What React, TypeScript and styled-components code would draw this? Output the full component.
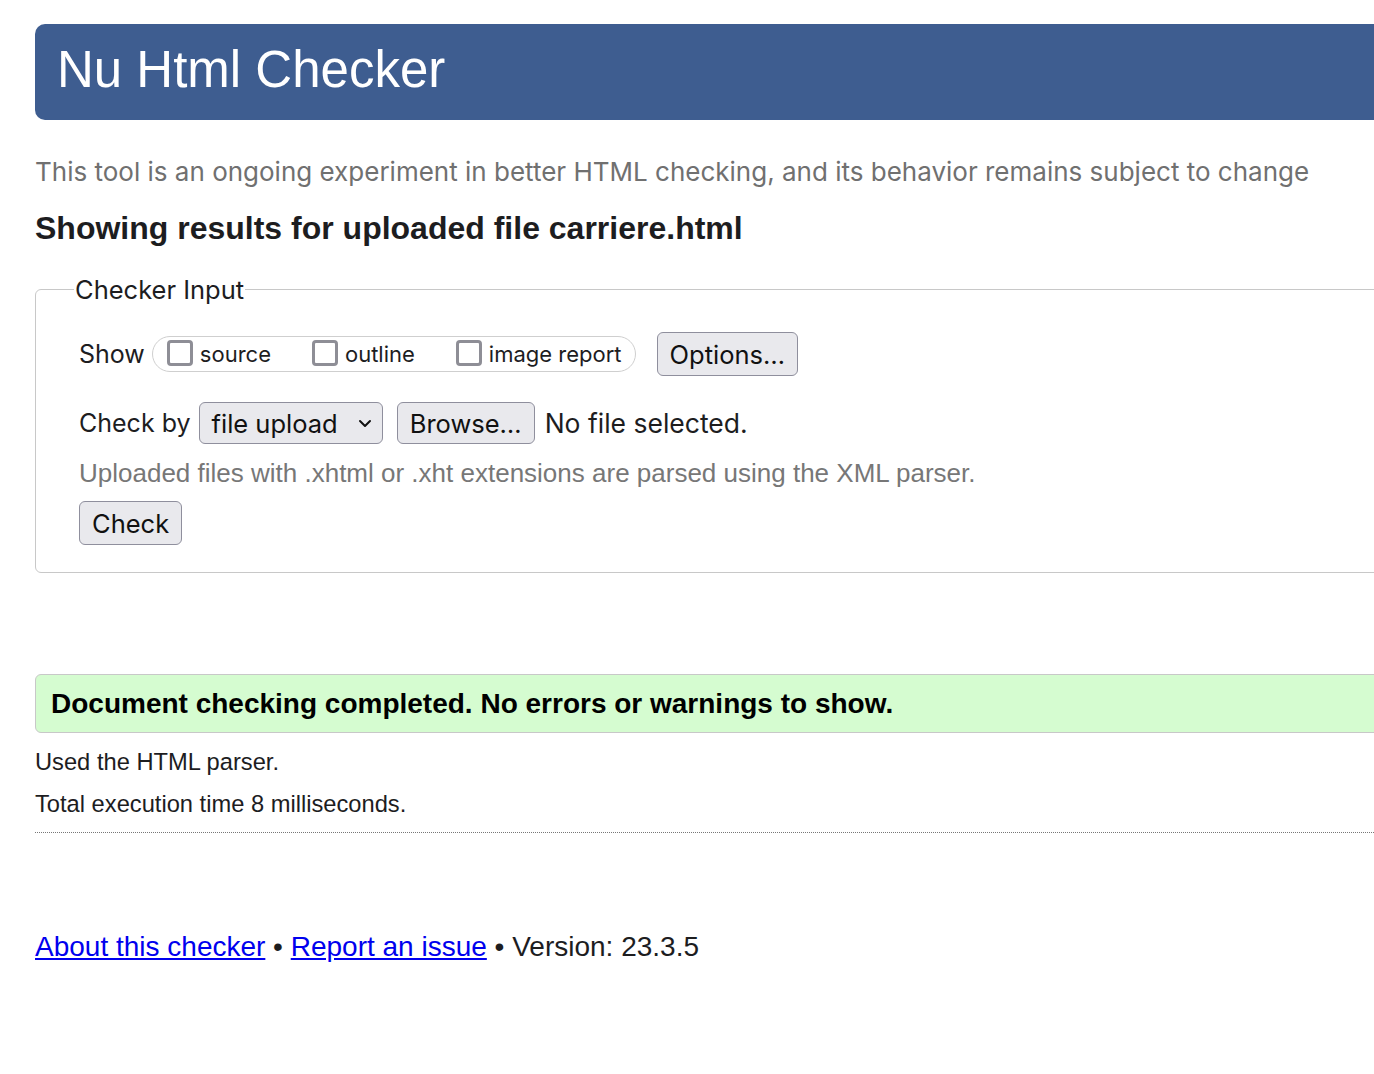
import React from 'react';
import styled, { createGlobalStyle } from 'styled-components';

const GlobalStyle = createGlobalStyle`
  html, body {
    margin: 0;
    padding: 0;
    background: #fff;
    overflow-x: hidden;
  }
`;

const Page = styled.div`
  padding: 24px 0 60px 35px;
  overflow: hidden;
  font-family: 'Liberation Sans', Arial, sans-serif;
  color: #222;
`;

const Block = styled.div`
  width: calc(100% + 40px);
  box-sizing: border-box;
`;

const Header = styled(Block)`
  height: 96px;
  background-color: #3e5d90;
  border-radius: 10px;
  display: flex;
  align-items: center;
  padding-left: 22px;
`;

const Title = styled.h1`
  margin: 0 0 6px;
  font-family: 'Liberation Sans', Arial, sans-serif;
  font-weight: 400;
  font-size: 51px;
  color: #fff;
`;

const Intro = styled.p`
  margin: 37px 0 0;
  font-family: Inter, 'Liberation Sans', sans-serif;
  font-size: 26px;
  line-height: 30px;
  color: #707070;
  white-space: nowrap;
`;

const ResultHeading = styled.h2`
  margin: 21px 0 0;
  font-size: 32px;
  line-height: 40px;
  font-weight: 700;
  color: #1d1d1f;
`;

const Fieldset = styled.fieldset`
  margin: 26px 0 0;
  width: calc(100% + 40px);
  box-sizing: border-box;
  border: 1.5px solid #c8c8c8;
  border-radius: 6px;
  padding: 11px 0 27px 43px;
  font-family: Inter, 'Liberation Sans', sans-serif;
  color: #1d1d1f;
`;

const Legend = styled.legend`
  margin-left: -5px;
  padding: 0 1px;
  font-size: 25.5px;
`;

const Row = styled.div`
  display: flex;
  align-items: center;
  gap: 8px;
  font-size: 25px;
`;

const ShowRow = styled(Row)`
  margin-top: 16px;
  gap: 7px;
`;

const CheckRow = styled(Row)`
  margin-top: 26px;
`;

const Pill = styled.div`
  display: flex;
  align-items: center;
  height: 36px;
  box-sizing: border-box;
  border: 1.5px solid #cfcfcf;
  border-radius: 18px;
  padding: 0 13px 0 14px;
  margin-right: 14px;
`;

const Option = styled.label<{ $last?: boolean }>`
  display: flex;
  align-items: center;
  gap: 7px;
  font-size: 22px;
  margin-right: ${(p) => (p.$last ? 0 : 41)}px;
`;

const Box = styled.span`
  width: 26px;
  height: 26px;
  box-sizing: border-box;
  border: 3px solid #8e8e96;
  border-radius: 4px;
  background: #fff;
  margin-top: -2px;
`;

const Button = styled.span<{ $h?: number; $space?: number }>`
  display: inline-flex;
  align-items: center;
  height: ${(p) => p.$h ?? 42}px;
  box-sizing: border-box;
  padding: 0 12px;
  margin-right: ${(p) => p.$space ?? 0}px;
  border: 1.5px solid #8f8f9d;
  border-radius: 6px;
  background: #e9e9ed;
  font-size: 25.5px;
  color: #111;
`;

const Select = styled(Button)`
  gap: 20px;
  padding-right: 10px;
`;

const Status = styled.span`
  font-size: 26.5px;
`;

const Note = styled.p`
  margin: 13px 0 0;
  font-family: 'Liberation Sans', Arial, sans-serif;
  font-size: 26px;
  line-height: 32px;
  color: #777;
  white-space: nowrap;
`;

const SubmitRow = styled.div`
  margin-top: 12px;
`;

const Success = styled(Block)`
  margin-top: 101px;
  height: 59px;
  display: flex;
  align-items: center;
  padding-left: 15px;
  background: #d5fcd0;
  border: 1.5px solid #c8c8c8;
  border-radius: 6px;
  font-size: 28px;
  font-weight: 700;
  color: #000;
`;

const Detail = styled.p`
  margin: 0;
  font-size: 23.7px;
  line-height: 42px;
  color: #1d1d1f;
`;

const DetailFirst = styled(Detail)`
  margin-top: 8px;
`;

const Rule = styled(Block)`
  margin-top: 7px;
  border-top: 1.5px dotted #777;
`;

const Footer = styled.p`
  margin: 98px 0 0;
  font-size: 28px;
  color: #1d1d1f;
  a {
    color: #0000ee;
    text-decoration: underline;
  }
`;

const Chevron = () => (
  <svg width="14" height="10" viewBox="0 0 14 10">
    <path d="M2 3l5 5 5-5" fill="none" stroke="#111" strokeWidth="2" strokeLinecap="round" strokeLinejoin="round" />
  </svg>
);

const App = () => {
  return (
    <Page>
      <GlobalStyle />
      <Header>
        <Title>Nu Html Checker</Title>
      </Header>
      <Intro>
        This tool is an ongoing experiment in better HTML checking, and its behavior remains subject to change
      </Intro>
      <ResultHeading>Showing results for uploaded file carriere.html</ResultHeading>
      <Fieldset>
        <Legend>Checker Input</Legend>
        <ShowRow>
          <span>Show</span>
          <Pill>
            <Option>
              <Box />
              source
            </Option>
            <Option>
              <Box />
              outline
            </Option>
            <Option $last>
              <Box />
              image report
            </Option>
          </Pill>
          <Button $h={44}>Options…</Button>
        </ShowRow>
        <CheckRow>
          <span>Check by</span>
          <Select $space={6}>
            file upload
            <Chevron />
          </Select>
          <Button $space={2}>Browse…</Button>
          <Status>No file selected.</Status>
        </CheckRow>
        <Note>Uploaded files with .xhtml or .xht extensions are parsed using the XML parser.</Note>
        <SubmitRow>
          <Button $h={44}>Check</Button>
        </SubmitRow>
      </Fieldset>
      <Success>Document checking completed. No errors or warnings to show.</Success>
      <DetailFirst>Used the HTML parser.</DetailFirst>
      <Detail>Total execution time 8 milliseconds.</Detail>
      <Rule />
      <Footer>
        <a href="#about">About this checker</a> • <a href="#issue">Report an issue</a> • Version: 23.3.5
      </Footer>
    </Page>
  );
};

export default App;
